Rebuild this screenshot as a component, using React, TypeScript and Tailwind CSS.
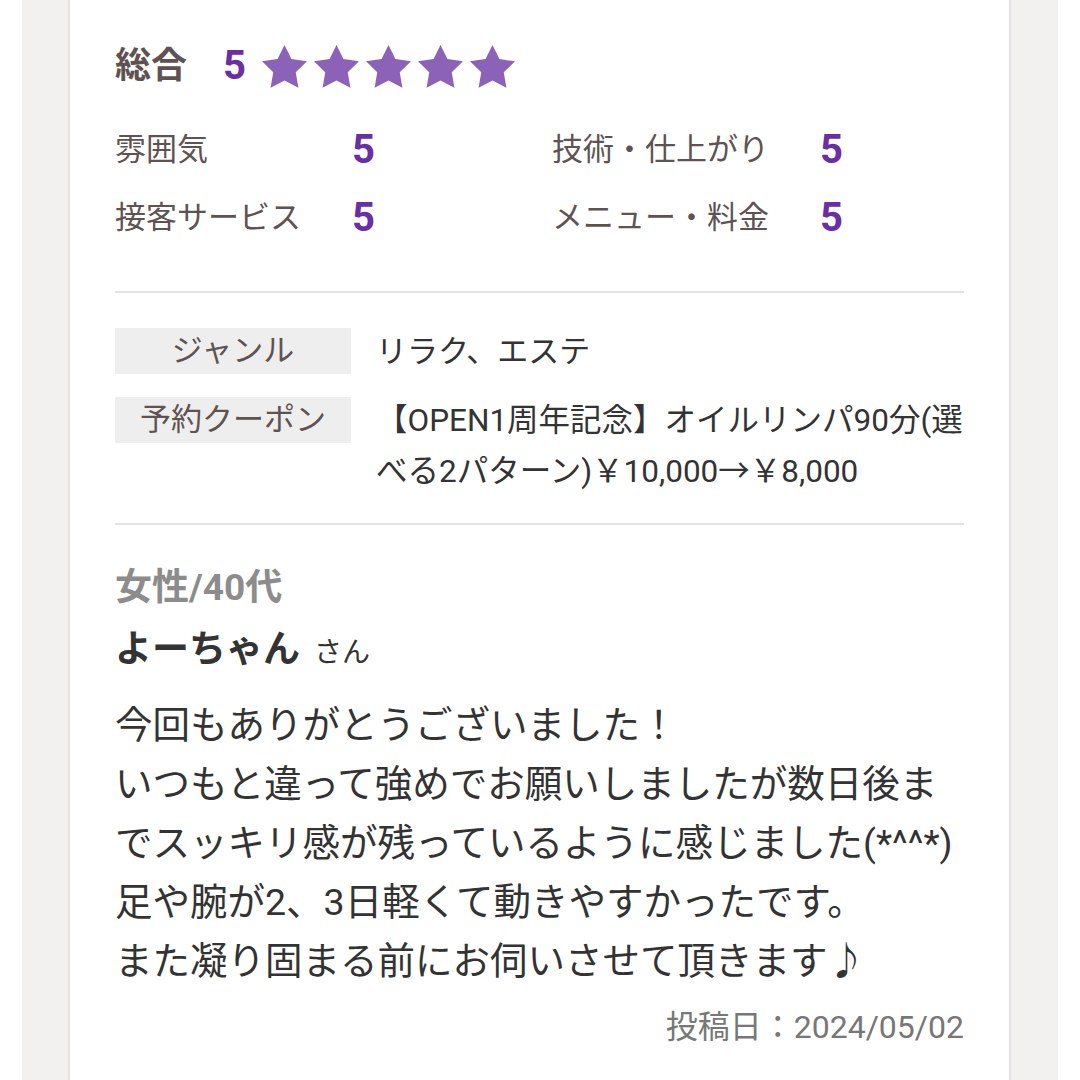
import React from 'react';

const ratings = [
  { label: '雰囲気', score: 5, label2: '技術・仕上がり', score2: 5 },
  { label: '接客サービス', score: 5, label2: 'メニュー・料金', score2: 5 },
];

function Star() {
  return (
    <svg viewBox="2 2 20 19.1" className="w-[45px] h-[43px] fill-[#8c62b8]">
      <polygon points="12,2 15.09,8.26 22,9.27 17,14.14 18.18,21.02 12,17.77 5.82,21.02 7,14.14 2,9.27 8.91,8.26" />
    </svg>
  );
}

export default function App() {
  return (
    <div className="w-[1080px] h-[1080px] overflow-hidden bg-white px-[22px] font-['Roboto','Noto_Sans_CJK_JP',sans-serif]">
      <div className="h-full bg-[#f2f1f0] pl-[46px] pr-[47px]">
        <div className="h-full bg-white border-x-2 border-[#e2e2e2] px-[45px] pt-[30px]">
          {/* 総合評価 */}
          <div className="flex items-center h-[72px]">
            <span className="text-[36px] font-bold text-[#5e5352] leading-none">総合</span>
            <span className="ml-[36px] text-[40px] font-bold text-[#6a2fa3] leading-none">5</span>
            <div className="ml-[16px] flex gap-[7px]">
              {[0, 1, 2, 3, 4].map((i) => (
                <Star key={i} />
              ))}
            </div>
          </div>

          {/* 項目別評価 */}
          <div className="mt-[14px]">
            {ratings.map((r) => (
              <div key={r.label} className="grid grid-cols-[237px_200px_268px_1fr] items-center h-[68px]">
                <span className="text-[31px] text-[#5e5352]">{r.label}</span>
                <span className="text-[40px] font-bold text-[#6a2fa3] leading-none">{r.score}</span>
                <span className="text-[31px] text-[#5e5352]">{r.label2}</span>
                <span className="text-[40px] font-bold text-[#6a2fa3] leading-none">{r.score2}</span>
              </div>
            ))}
          </div>

          <div className="mt-[39px] h-[2px] bg-[#e3e3e3]" />

          {/* ジャンル・クーポン */}
          <div className="mt-[34px] flex items-start">
            <div className="mt-[1px] w-[236px] h-[46px] bg-[#eeeeee] text-center text-[31px] leading-[46px] text-[#5e5352]">
              ジャンル
            </div>
            <div className="ml-[25px] text-[31px] leading-[50px] text-[#333333]">リラク、エステ</div>
          </div>
          <div className="mt-[18px] flex items-start">
            <div className="mt-[2px] w-[236px] h-[46px] bg-[#eeeeee] text-center text-[31px] leading-[46px] text-[#5e5352]">
              予約クーポン
            </div>
            <div className="ml-[25px] text-[31.5px] leading-[51px] text-[#333333] whitespace-nowrap">
              <div>【OPEN1周年記念】オイルリンパ90分(選</div>
              <div>べる2パターン)￥10,000→￥8,000</div>
            </div>
          </div>

          <div className="mt-[26px] h-[2px] bg-[#e3e3e3]" />

          {/* 口コミ */}
          <div className="mt-[38px] text-[37px] font-bold leading-[50px] text-[#8c8c8c]">女性/40代</div>
          <div className="mt-[12px] leading-[50px] text-[#333333]">
            <span className="text-[37px] font-bold">よーちゃん</span>
            <span className="ml-[14px] text-[28px]">さん</span>
          </div>
          <div className="mt-[14px] text-[37.5px] leading-[59px] text-[#333333] whitespace-nowrap">
            <div>今回もありがとうございました！</div>
            <div>いつもと違って強めでお願いしましたが数日後ま</div>
            <div>でスッキリ感が残っているように感じました(*^^*)</div>
            <div>足や腕が2、3日軽くて動きやすかったです。</div>
            <div>また凝り固まる前にお伺いさせて頂きます♪</div>
          </div>
          <div className="mt-[16px] text-right text-[32px] leading-[40px] text-[#777777]">投稿日：2024/05/02</div>
        </div>
      </div>
    </div>
  );
}
